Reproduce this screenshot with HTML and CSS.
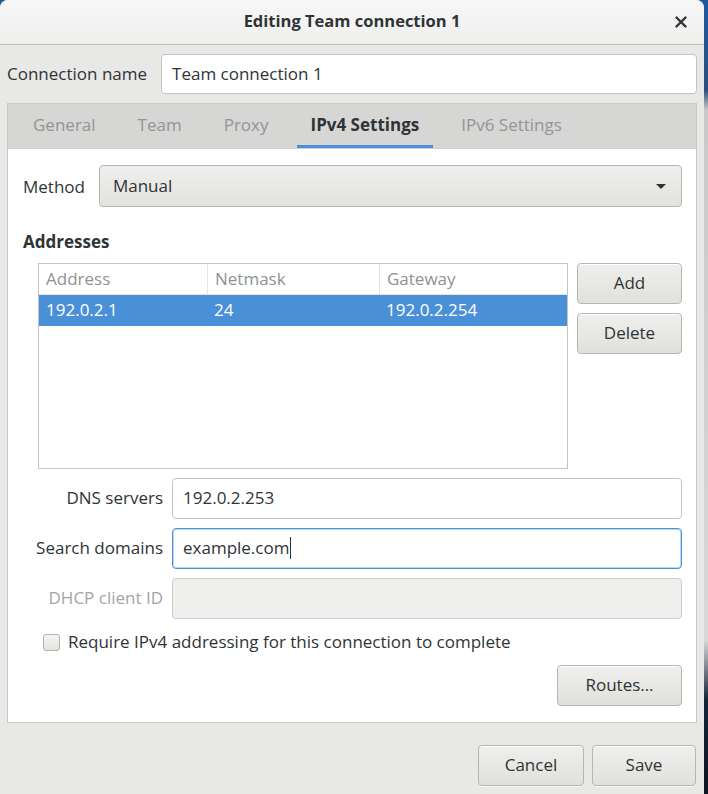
FILE: index.html
```html
<!DOCTYPE html>
<html lang="en">
<head>
    <meta charset="UTF-8">
    <meta name="viewport" content="width=device-width, initial-scale=1.0">
    <title>Editing Team connection 1</title>
    <link rel="stylesheet" href="styles.css">
</head>
<body>
    <div class="window">
        <header class="titlebar">
            <span class="title">Editing Team connection 1</span>
            <button class="close" aria-label="Close">
                <svg width="12" height="12" viewBox="0 0 12 12">
                    <path d="M1.5 1.5 L10.5 10.5 M10.5 1.5 L1.5 10.5" stroke="#2e3436" stroke-width="2.4" stroke-linecap="round"/>
                </svg>
            </button>
        </header>

        <main class="dialog">
            <div class="name-row">
                <span class="label">Connection name</span>
                <div class="entry name-entry">Team connection 1</div>
            </div>

            <div class="notebook">
                <nav class="tabs">
                    <span class="tab">General</span>
                    <span class="tab">Team</span>
                    <span class="tab">Proxy</span>
                    <span class="tab active">IPv4 Settings</span>
                    <span class="tab">IPv6 Settings</span>
                </nav>

                <section class="page">
                    <div class="method-row">
                        <span class="label">Method</span>
                        <div class="combo">
                            <span>Manual</span>
                            <span class="arrow"></span>
                        </div>
                    </div>

                    <h3 class="section-title">Addresses</h3>

                    <div class="addresses">
                        <div class="tree">
                            <div class="tree-row tree-head">
                                <span>Address</span>
                                <span>Netmask</span>
                                <span>Gateway</span>
                            </div>
                            <div class="tree-row selected">
                                <span>192.0.2.1</span>
                                <span>24</span>
                                <span>192.0.2.254</span>
                            </div>
                        </div>
                        <div class="side-buttons">
                            <button class="btn">Add</button>
                            <button class="btn">Delete</button>
                        </div>
                    </div>

                    <div class="form-grid">
                        <span class="label">DNS servers</span>
                        <div class="entry">192.0.2.253</div>

                        <span class="label">Search domains</span>
                        <div class="entry focused">example.com<span class="caret"></span></div>

                        <span class="label disabled">DHCP client ID</span>
                        <div class="entry insensitive"></div>
                    </div>

                    <label class="check">
                        <span class="box"></span>
                        <span>Require IPv4 addressing for this connection to complete</span>
                    </label>

                    <div class="routes-row">
                        <button class="btn routes">Routes…</button>
                    </div>
                </section>
            </div>

            <div class="actions">
                <button class="btn cancel">Cancel</button>
                <button class="btn save">Save</button>
            </div>
        </main>
    </div>
</body>
</html>
```

FILE: styles.css
```css
* {
    box-sizing: border-box;
}
html, body {
    margin: 0;
    height: 100%;
}
body {
    background: linear-gradient(to bottom, #1d5aa0 0, #2b4f7e 90px, #c9c9c9 110px, #d8d8d8 640px, #15233a 700px, #0d1422 100%);
    font-family: "Open Sans", "DejaVu Sans", sans-serif;
    font-size: 17px;
    color: #2e3436;
    overflow: hidden;
}
.window {
    width: 704px;
    height: 794px;
    background: #e8e8e7;
    border-radius: 8px 8px 0 0;
    overflow: hidden;
    display: flex;
    flex-direction: column;
}

/* header bar */
.titlebar {
    height: 45px;
    flex: none;
    display: flex;
    align-items: center;
    justify-content: center;
    position: relative;
    background: linear-gradient(to bottom, #f7f7f7, #efefee);
    border-bottom: 1px solid #bfbfbc;
}
.title {
    font-weight: 700;
    font-size: 16.5px;
    margin-top: -3px;
}
.close {
    position: absolute;
    right: 16px;
    top: 15px;
    width: 14px;
    height: 14px;
    padding: 0;
    border: 0;
    background: none;
    display: flex;
    align-items: center;
    justify-content: center;
}

.dialog {
    flex: 1;
    display: flex;
    flex-direction: column;
    padding: 9px 7px 8px 7px;
}
.label {
    white-space: nowrap;
}
.label.disabled {
    color: #a3a5a5;
}

/* entries */
.entry {
    height: 41px;
    background: #fff;
    border: 1px solid #c4c4c0;
    border-radius: 4px;
    padding: 0 10px 2px;
    display: flex;
    align-items: center;
}
.entry.focused {
    border-color: #4a90d9;
    box-shadow: inset 0 0 0 1px rgba(74, 144, 217, 0.35);
}
.entry.insensitive {
    background: #efefee;
    border-color: #cdcdca;
}
.caret {
    display: inline-block;
    width: 1px;
    height: 22px;
    background: #2e3436;
    margin-left: 1px;
}

.name-row {
    display: flex;
    align-items: center;
    gap: 14px;
}
.name-row .label {
    margin-top: -2px;
}
.name-row .name-entry {
    flex: 1;
    height: 40px;
}

/* notebook */
.notebook {
    margin-top: 9px;
    height: 620px;
    border: 1px solid #c9c9c6;
    display: flex;
    flex-direction: column;
    background: #fff;
}
.tabs {
    height: 45px;
    flex: none;
    background: #d6d6d5;
    display: flex;
    align-items: stretch;
    gap: 14px;
    padding-left: 11px;
    border-bottom: 1px solid #cfcfcc;
}
.tab {
    padding: 0 14px;
    display: flex;
    align-items: center;
    color: #929595;
    border-bottom: 3px solid transparent;
}
.tab.active {
    color: #2e3436;
    font-weight: 700;
    border-bottom-color: #4a90d9;
}

.page {
    flex: 1;
    padding: 16px 14px 15px 15px;
    display: flex;
    flex-direction: column;
}
.method-row {
    display: flex;
    align-items: center;
    gap: 14px;
}
.combo {
    flex: 1;
    height: 42px;
    border: 1px solid #b6b6b3;
    border-radius: 4px;
    background: linear-gradient(to bottom, #eeeeec, #e2e2df);
    display: flex;
    align-items: center;
    justify-content: space-between;
    padding: 0 15px 2px 13px;
}
.arrow {
    width: 0;
    height: 0;
    border-left: 5px solid transparent;
    border-right: 5px solid transparent;
    border-top: 5px solid #2e3436;
    margin-top: 2px;
}
.section-title {
    margin: 24px 0 10px;
    font-size: 17px;
    font-weight: 700;
    line-height: 22px;
}

/* address list */
.addresses {
    display: flex;
    gap: 9px;
    margin-left: 15px;
}
.tree {
    width: 530px;
    height: 206px;
    border: 1px solid #c4c4c0;
    background: #fff;
}
.tree-row {
    display: grid;
    grid-template-columns: 168px 172px 1fr;
    height: 31px;
}
.tree-row span {
    display: flex;
    align-items: center;
    padding: 0 0 2px 7px;
}
.tree-head {
    color: #8f9293;
    border-bottom: 1px solid #e4e4e2;
}
.tree-head span + span {
    border-left: 1px solid #e4e4e2;
}
.tree-row.selected {
    background: #4a90d9;
    color: #fff;
}
.side-buttons {
    display: flex;
    flex-direction: column;
    gap: 9px;
}

/* buttons */
.btn {
    font-family: inherit;
    font-size: 17px;
    color: #2e3436;
    height: 41px;
    width: 105px;
    border: 1px solid #b6b6b3;
    border-radius: 4px;
    background: linear-gradient(to bottom, #efefed, #e0e0dd);
    box-shadow: inset 0 1px #fff, 0 1px rgba(255, 255, 255, 0.6);
    padding: 0 0 2px;
}

.form-grid {
    display: grid;
    grid-template-columns: 140px 1fr;
    column-gap: 9px;
    row-gap: 9px;
    margin-top: 9px;
}
.form-grid .label {
    text-align: right;
    align-self: center;
    margin-top: -2px;
}

.check {
    display: flex;
    align-items: center;
    gap: 8px;
    margin: 11px 0 0 20px;
    height: 22px;
}
.box {
    width: 17px;
    height: 17px;
    border: 1px solid #b1b1ae;
    border-radius: 3px;
    background: linear-gradient(to bottom, #f4f4f2, #e3e3e0);
    margin-top: 2px;
}

.routes-row {
    display: flex;
    justify-content: flex-end;
    margin-top: 13px;
}
.btn.routes {
    width: 125px;
}

.actions {
    display: flex;
    justify-content: flex-end;
    gap: 8px;
    margin-top: auto;
    padding-right: 1px;
}
.btn.cancel {
    width: 106px;
}
.btn.save {
    width: 104px;
}
```
